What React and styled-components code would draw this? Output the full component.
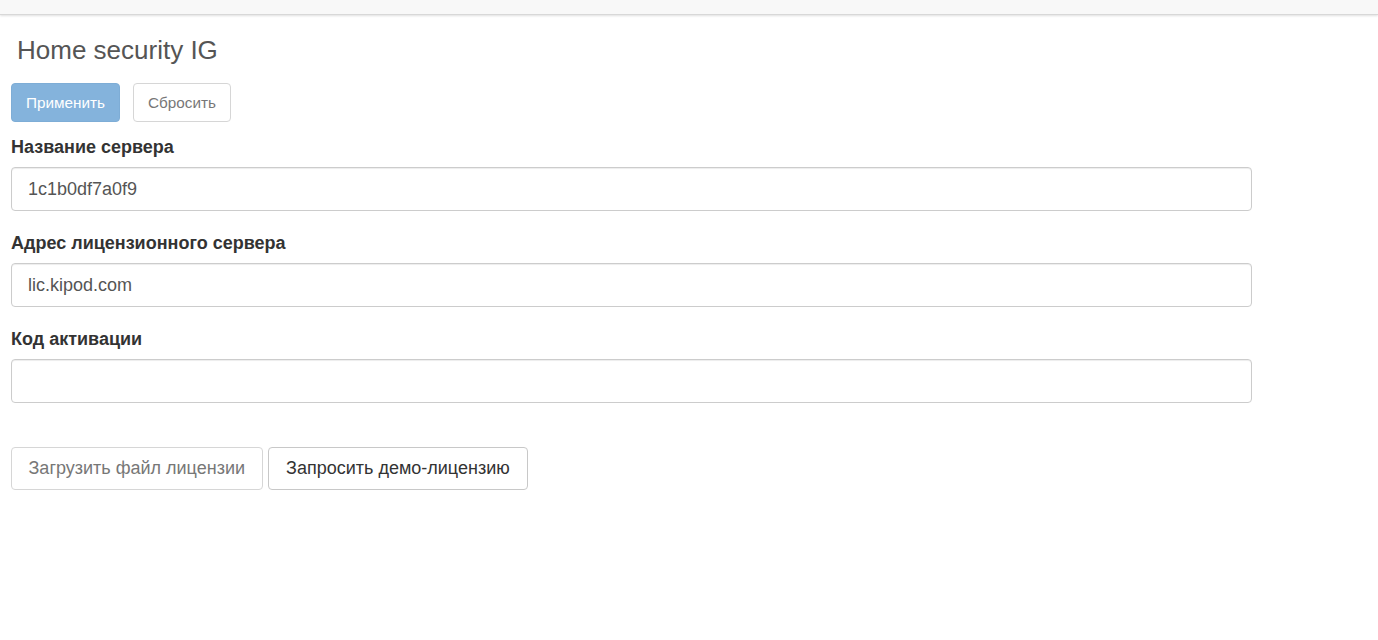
import React from "react";
import styled, { createGlobalStyle } from "styled-components";

const GlobalStyle = createGlobalStyle`
  body {
    margin: 0;
    background: #fff;
    font-family: "Liberation Sans", Arial, sans-serif;
    color: #333;
  }
`;

const TopBar = styled.div`
  height: 14px;
  background-color: #f8f8f8;
  border-bottom: 1px solid #d8d8d8;
  box-shadow: 0 1px 2px rgba(0, 0, 0, 0.12);
`;

const Page = styled.div`
  padding: 0 11px;
`;

const Title = styled.h1`
  margin: 20px 0 0 6px;
  font-size: 26px;
  font-weight: 400;
  line-height: 30px;
  color: #555;
`;

const Toolbar = styled.div`
  display: flex;
  gap: 13px;
  margin-top: 18px;
`;

const Button = styled.button`
  box-sizing: border-box;
  height: ${({ $tall }) => ($tall ? "43px" : "39px")};
  padding: 0 ${({ $tall }) => ($tall ? "16.5px" : "14px")};
  font-family: "Liberation Sans", Arial, sans-serif;
  font-size: ${({ $tall }) => ($tall ? "18px" : "15.3px")};
  border-radius: 4px;
  border: 1px solid ${({ $primary }) => ($primary ? "#7eadd6" : "#d6d6d6")};
  background-color: ${({ $primary }) => ($primary ? "#84b3dc" : "#fff")};
  color: ${({ $primary, $muted }) => ($primary ? "#fff" : $muted ? "#777" : "#333")};
  ${({ $dark }) => $dark && "border-color: #c8c8c8; padding: 0 17.5px;"}
`;

const Form = styled.div`
  width: 1241px;
  margin-top: 14px;
`;

const Group = styled.div`
  margin-bottom: ${({ $last }) => ($last ? "0" : "21px")};
`;

const Label = styled.label`
  display: block;
  font-size: 18px;
  font-weight: 700;
  line-height: 22px;
  margin-bottom: 9px;
  color: #333;
`;

const Input = styled.input`
  box-sizing: border-box;
  display: block;
  width: 100%;
  height: 44px;
  padding: 0 16px;
  font-family: "Liberation Sans", Arial, sans-serif;
  font-size: 18px;
  color: #555;
  border: 1px solid #ccc;
  border-radius: 4px;
  box-shadow: inset 0 1px 1px rgba(0, 0, 0, 0.075);
  outline: none;
`;

const Actions = styled.div`
  display: flex;
  gap: 5px;
  margin-top: 44px;
`;

const fields = [
  { label: "Название сервера", value: "1c1b0df7a0f9" },
  { label: "Адрес лицензионного сервера", value: "lic.kipod.com" },
  { label: "Код активации", value: "" },
];

export default function App() {
  return (
    <>
      <GlobalStyle />
      <TopBar />
      <Page>
        <Title>Home security IG</Title>
        <Toolbar>
          <Button $primary>Применить</Button>
          <Button $muted>Сбросить</Button>
        </Toolbar>
        <Form>
          {fields.map((f, i) => (
            <Group key={f.label} $last={i === fields.length - 1}>
              <Label>{f.label}</Label>
              <Input defaultValue={f.value} />
            </Group>
          ))}
        </Form>
        <Actions>
          <Button $tall $muted>Загрузить файл лицензии</Button>
          <Button $tall $dark>Запросить демо-лицензию</Button>
        </Actions>
      </Page>
    </>
  );
}
